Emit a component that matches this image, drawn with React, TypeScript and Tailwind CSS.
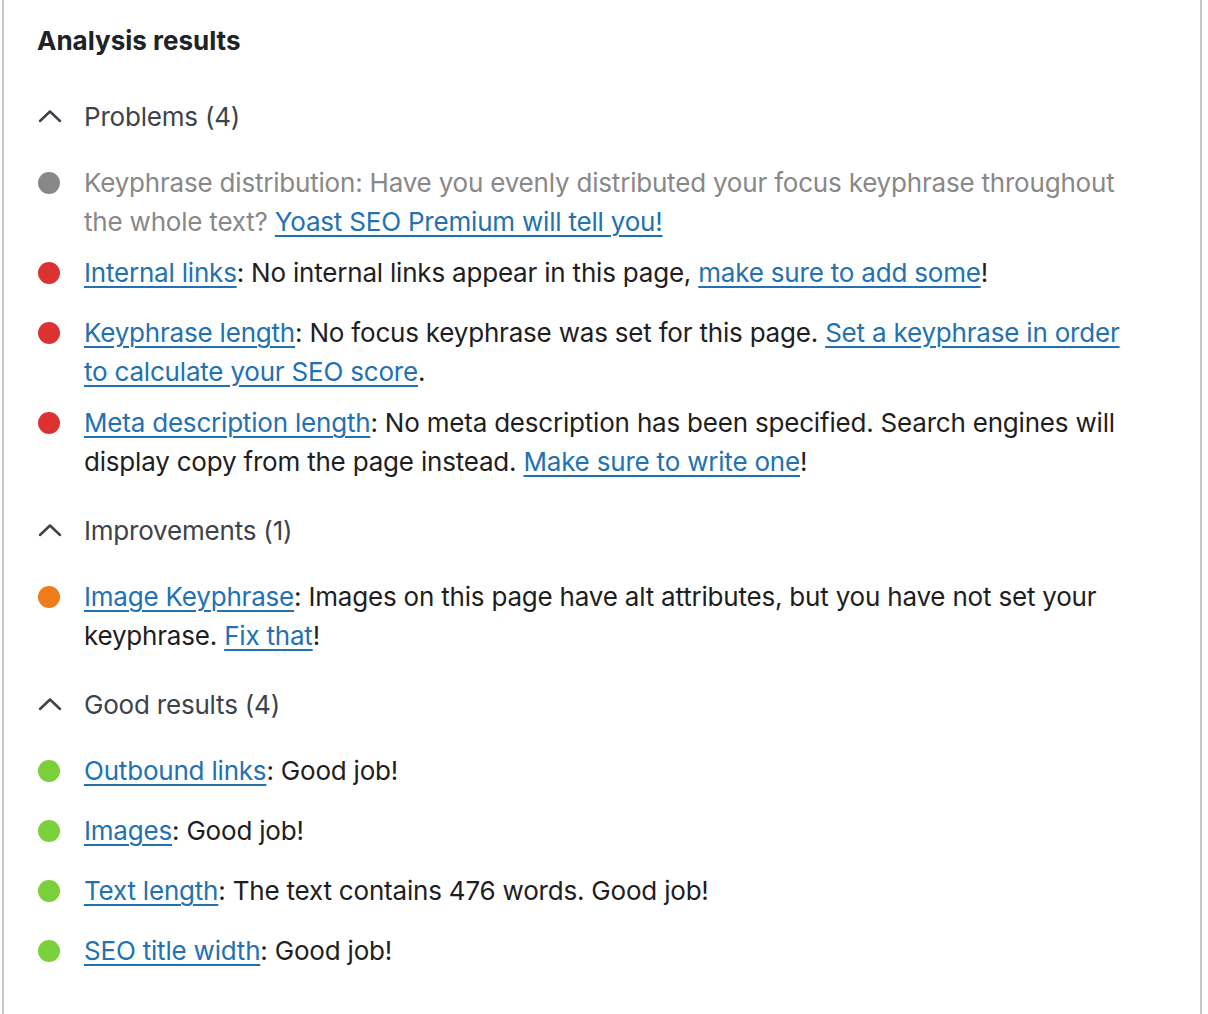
import React from "react";

type Result = {
  color: string;
  muted?: boolean;
  body: React.ReactNode;
};

const Link = ({ children }: { children: React.ReactNode }) => (
  <a href="#" className="text-[#2271b1] underline decoration-[2px] underline-offset-[4px]">
    {children}
  </a>
);

const problems: Result[] = [
  {
    color: "bg-[#888888]",
    muted: true,
    body: (
      <>
        Keyphrase distribution: Have you evenly distributed your focus keyphrase throughout the whole text?{" "}
        <Link>Yoast SEO Premium will tell you!</Link>
      </>
    ),
  },
  {
    color: "bg-[#dc3232]",
    body: (
      <>
        <Link>Internal links</Link>: No internal links appear in this page, <Link>make sure to add some</Link>!
      </>
    ),
  },
  {
    color: "bg-[#dc3232]",
    body: (
      <>
        <Link>Keyphrase length</Link>: No focus keyphrase was set for this page.{" "}
        <Link>Set a keyphrase in order to calculate your SEO score</Link>.
      </>
    ),
  },
  {
    color: "bg-[#dc3232]",
    body: (
      <>
        <Link>Meta description length</Link>: No meta description has been specified. Search engines will display
        copy from the page instead. <Link>Make sure to write one</Link>!
      </>
    ),
  },
];

const improvements: Result[] = [
  {
    color: "bg-[#ee7c1b]",
    body: (
      <>
        <Link>Image Keyphrase</Link>: Images on this page have alt attributes, but you have not set your keyphrase.{" "}
        <Link>Fix that</Link>!
      </>
    ),
  },
];

const good: Result[] = [
  { color: "bg-[#7ad03a]", body: (<><Link>Outbound links</Link>: Good job!</>) },
  { color: "bg-[#7ad03a]", body: (<><Link>Images</Link>: Good job!</>) },
  { color: "bg-[#7ad03a]", body: (<><Link>Text length</Link>: The text contains 476 words. Good job!</>) },
  { color: "bg-[#7ad03a]", body: (<><Link>SEO title width</Link>: Good job!</>) },
];

const Section = ({ title, items }: { title: string; items: Result[] }) => (
  <div>
    <button type="button" className="flex h-[48px] items-center text-[#3c434a] tracking-[-0.2px]">
      <span className="flex w-[47px] items-center">
        <svg width="24" height="14" viewBox="0 0 24 14" fill="none" className="ml-[1px]">
          <polyline points="2,12 12,2.5 22,12" stroke="#3c434a" strokeWidth="2.5" strokeLinecap="round" strokeLinejoin="round" />
        </svg>
      </span>
      <span>{title}</span>
    </button>
    <ul className="mt-[23px] mb-[25px] flex flex-col gap-[12px]">
      {items.map((item, i) => (
        <li key={i} className="flex min-h-[48px]">
          <span className="flex h-[39px] w-[47px] shrink-0 items-center">
            <span className={`ml-[1px] h-[22px] w-[22px] rounded-full ${item.color}`} />
          </span>
          <p
            className={`w-[1056px] tracking-[-0.2px] ${item.muted ? "text-[#888888]" : "text-[#1e1e1e]"}`}
          >
            {item.body}
          </p>
        </li>
      ))}
    </ul>
  </div>
);

export default function App() {
  return (
    <div
      className="min-h-screen bg-white"
      style={{ fontFamily: "Inter, 'Noto Sans', sans-serif" }}
    >
      <div className="ml-[2px] min-h-screen w-[1200px] border-x-2 border-[#c8c8c8] pl-[33px] pt-[21px] text-[26px] leading-[39px]">
        <h2 className="mb-[32px] font-bold text-[#1d2327]">Analysis results</h2>
        <Section title="Problems (4)" items={problems} />
        <Section title="Improvements (1)" items={improvements} />
        <Section title="Good results (4)" items={good} />
      </div>
    </div>
  );
}
